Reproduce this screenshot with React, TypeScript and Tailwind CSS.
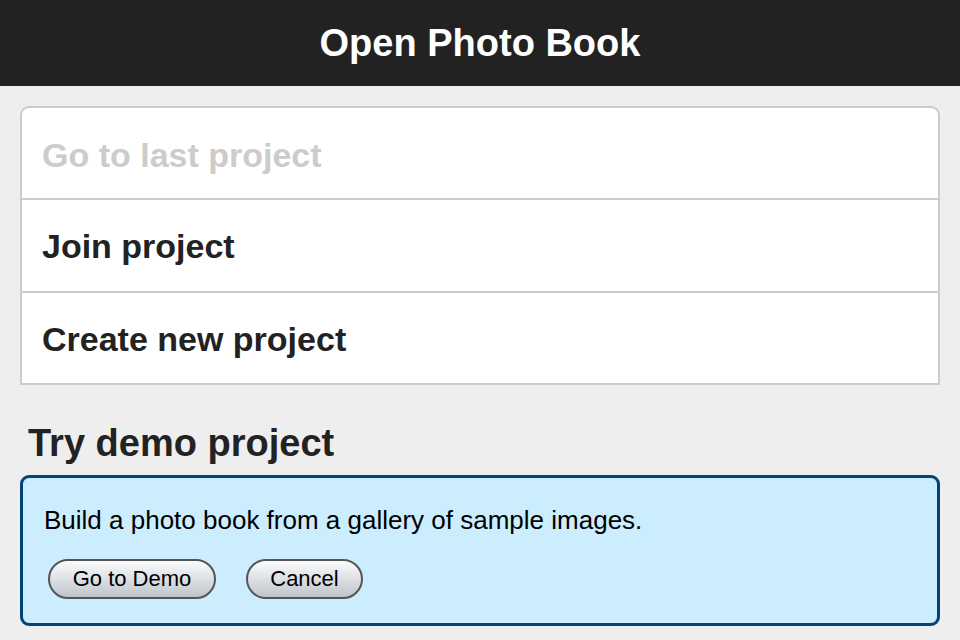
import React from "react";

export default function App() {
  const font = { fontFamily: '"Liberation Sans", Arial, Helvetica, sans-serif' };
  return (
    <div className="w-[960px] h-[640px] bg-[#eeeeee] flex flex-col overflow-hidden" style={font}>
      <div className="h-[86px] bg-[#222222] flex items-center justify-center shrink-0">
        <h1 className="text-white font-bold text-[38px] leading-none">Open Photo Book</h1>
      </div>
      <div className="px-[20px] pt-[20px]">
        <div className="bg-white border-2 border-[#cccccc] rounded-t-[9px] flex flex-col">
          <div className="h-[90px] flex items-center pt-[4px] px-[20px] text-[34px] font-bold text-[#cccccc]">Go to last project</div>
          <div className="h-[93px] border-t-2 border-[#cccccc] flex items-center pt-[2px] px-[20px] text-[34px] font-bold text-[#222222]">Join project</div>
          <div className="h-[92px] border-t-2 border-[#cccccc] flex items-center pt-[2px] px-[20px] text-[34px] font-bold text-[#222222]">Create new project</div>
        </div>
        <h2 className="mt-[38px] ml-[8px] text-[38px] leading-[40px] font-bold text-[#222222]">Try demo project</h2>
        <div className="mt-[12px] h-[151px] bg-[#cbedfd] border-[3px] border-[#024479] rounded-[9px] px-[21px] pt-[27px]">
          <p className="text-[26px] leading-[30px] text-black">Build a photo book from a gallery of sample images.</p>
          <div className="mt-[24px] flex gap-[30px] pl-[4px]">
            <button className="h-[40px] w-[168px] rounded-full border-2 border-[#555555] bg-gradient-to-b from-[#fbfcfd] to-[#bfc5cb] text-[22px] leading-none text-black">Go to Demo</button>
            <button className="h-[40px] w-[117px] rounded-full border-2 border-[#555555] bg-gradient-to-b from-[#fbfcfd] to-[#bfc5cb] text-[22px] leading-none text-black">Cancel</button>
          </div>
        </div>
      </div>
    </div>
  );
}
